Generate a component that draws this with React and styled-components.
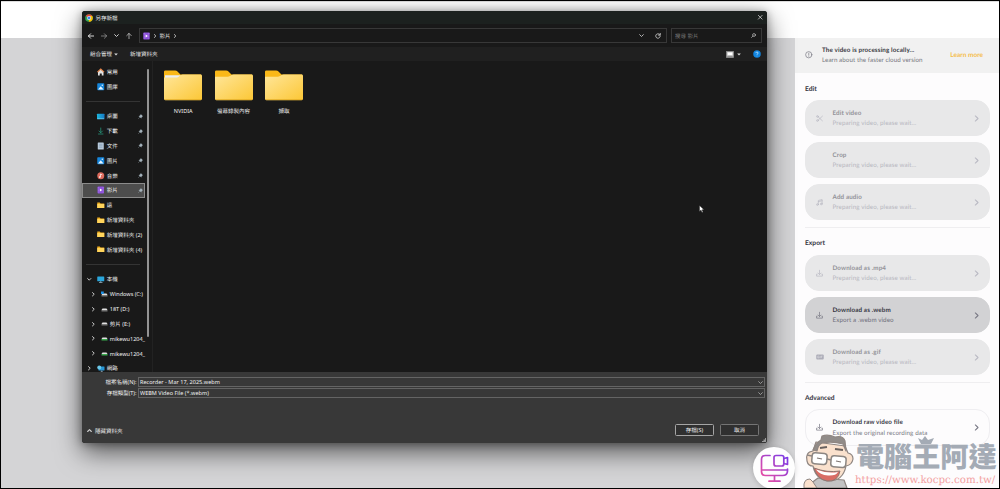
import React from "react";
import styled, { createGlobalStyle } from "styled-components";

const Global = createGlobalStyle`
  * { box-sizing: border-box; }
  body { margin: 0; background: #000; overflow: hidden; text-rendering: geometricPrecision; }
  svg { display: block; flex: none; overflow: visible; }
`;

const Screen = styled.div`
  position: relative;
  width: 1000px;
  height: 489px;
  border: 1px solid #000;
  background: #d4d4d6;
  overflow: hidden;
  display: flex;
  flex-direction: column;
  font-family: Lato, "Noto Sans CJK TC", sans-serif;
`;
const Header = styled.div`
  height: 37px;
  flex: none;
  background: #fff;
  border-top: 1px solid #ddd;
`;
const Main = styled.div`
  flex: 1;
  display: flex;
  justify-content: flex-end;
`;
const Panel = styled.aside`
  width: 204px;
  background: #fdfcfd;
`;
const Notice = styled.div`
  height: 35px;
  margin-bottom: 6.5px;
  padding: 0 16px 1px 9.5px;
  display: flex;
  align-items: center;
  background: #f1f1f1;
`;
const NoticeText = styled.div`
  flex: 1;
  margin-left: 10px;
  padding-top: 2.6px;
`;
const LearnMore = styled.div`
  padding-top: 2.4px;
`;
const Line = styled.div`
  font-size: ${(p) => p.$size || 6.25}px;
  letter-spacing: ${(p) => p.$track || 0}px;
  font-weight: ${(p) => (p.$bold ? 700 : 400)};
  line-height: 10.4px;
  color: ${(p) => p.$color};
  white-space: nowrap;
`;
const Group = styled.section`
  margin: 0 9px 0 10px;
  padding-bottom: 6.5px;
  border-bottom: ${(p) => (p.$last ? "none" : "1px solid #efeef0")};
`;
const GroupTitle = styled.h2`
  margin: 0;
  height: ${(p) => p.$h || 20}px;
  padding-top: ${(p) => p.$top || 3}px;
  font-size: 6.7px;
  line-height: 12px;
  color: #35353f;
`;
const cardColors = {
  off: { bg: "#e8e8e9", title: "#929298", sub: "#b7b7bf", icon: "#b9b9c3" },
  on: { bg: "#d2d2d4", title: "#34343f", sub: "#6f6f7b", icon: "#777783" },
  plain: { bg: "#fdfcfd", title: "#34343f", sub: "#797984", icon: "#777783" },
};
const Card = styled.div`
  height: 36.4px;
  margin-bottom: 5.6px;
  padding: 0 9px 0 10px;
  border-radius: 14px;
  display: flex;
  align-items: center;
  background: ${(p) => cardColors[p.$kind].bg};
  border: 1px solid ${(p) => (p.$kind === "plain" ? "#efeef1" : cardColors[p.$kind].bg)};
  color: ${(p) => cardColors[p.$kind].icon};
  &:last-child { margin-bottom: 0; }
`;
const CardIcon = styled.div`
  width: 16.5px;
  flex: none;
`;
const CardText = styled.div`
  flex: 1;
  padding-top: 2.2px;
`;

const Fab = styled.div`
  position: absolute;
  left: 752px;
  top: 446px;
  width: 42px;
  height: 42px;
  border-radius: 50%;
  background: #fefefe;
  box-shadow: 0 1px 5px rgba(0, 0, 0, 0.18);
  display: flex;
  align-items: center;
  justify-content: center;
`;

const Dialog = styled.div`
  position: absolute;
  left: 81px;
  top: 10px;
  width: 685px;
  height: 432px;
  border-radius: 3px;
  overflow: hidden;
  box-shadow: 0 9px 26px rgba(0, 0, 0, 0.6), 0 1px 9px rgba(0, 0, 0, 0.35);
  background: #191919;
  color: #f2f2f2;
  font-family: "Noto Sans", "Noto Sans CJK TC", sans-serif;
  font-size: 5.5px;
  display: flex;
  flex-direction: column;
  white-space: nowrap;
`;
const TitleBar = styled.div`
  height: 13px;
  padding: 0 5px 0 3px;
  display: flex;
  align-items: center;
  gap: 2.5px;
  background: #1c211f;
`;
const Spacer = styled.div`
  flex: 1;
`;
const NavBar = styled.div`
  height: 23px;
  padding: 0 0 0 6px;
  display: flex;
  align-items: center;
`;
const NavButtons = styled.div`
  width: 51px;
  flex: none;
  display: flex;
  align-items: center;
  gap: 7px;
`;
const Field = styled.div`
  width: ${(p) => p.$w}px;
  flex: none;
  height: 15.5px;
  margin-right: 4px;
  padding: 0 5px 0 3px;
  border: 1px solid #383838;
  display: flex;
  align-items: center;
  gap: 2.8px;
  color: ${(p) => p.$color || "#e6e6e6"};
`;
const FieldGap = styled.div`
  width: 5px;
`;
const ToolBar = styled.div`
  height: 14px;
  padding: 0 6.5px 0 8px;
  display: flex;
  align-items: center;
  background: #202020;
`;
const ToolItem = styled.div`
  display: flex;
  align-items: center;
  gap: ${(p) => p.$gap || 1.5}px;
  margin-right: ${(p) => p.$mr || 0}px;
`;
const Body = styled.div`
  height: 311px;
  display: flex;
  overflow: hidden;
`;
const Sidebar = styled.div`
  width: 63px;
  flex: none;
  padding-top: 3.4px;
`;
const SideRow = styled.div`
  height: 14.83px;
  padding-right: ${(p) => (p.$active ? 1 : 2)}px;
  display: flex;
  align-items: center;
  border: 1px solid ${(p) => (p.$active ? "#8b8b8b" : "transparent")};
  border-left-width: ${(p) => (p.$active ? 1 : 0)}px;
  border-right-width: ${(p) => (p.$active ? 1 : 0)}px;
  padding-left: ${(p) => (p.$active ? 14 : p.$depth ? 9 : p.$tree ? 5 : 15)}px;
  background: ${(p) => (p.$active ? "#4d4d4d" : "transparent")};
`;
const Caret = styled.div`
  width: ${(p) => (p.$depth ? 9.5 : 10)}px;
  flex: none;
`;
const SideLabel = styled.div`
  flex: 1;
  margin-left: 2.3px;
  line-height: 12px;
`;
const SideRule = styled.div`
  height: 14.83px;
  padding: 7px 5px 0 4px;
  &::before {
    content: "";
    display: block;
    height: 1px;
    background: #343434;
  }
`;
const ScrollTrack = styled.div`
  width: 8px;
  flex: none;
  padding: 8px 0 0 2px;
  border-right: 1px solid #222;
  &::before {
    content: "";
    display: block;
    width: 2px;
    height: 268px;
    border-radius: 1px;
    background: #939393;
  }
`;
const Files = styled.div`
  flex: 1;
  padding: 9px 0 0 5px;
  display: flex;
`;
const FileItem = styled.div`
  width: 50.4px;
  display: flex;
  flex-direction: column;
  align-items: center;
`;
const FileName = styled.div`
  margin-top: 4.8px;
  line-height: 10px;
`;
const Footer = styled.div`
  position: relative;
  flex: 1;
  padding: 4.6px 2px 0 0;
  background: #383838;
`;
const FormRow = styled.div`
  height: 11px;
  display: flex;
  align-items: center;
`;
const FormLabel = styled.div`
  width: 56px;
  padding-right: 1.5px;
  text-align: right;
`;
const FormInput = styled.div`
  flex: 1;
  height: 10.5px;
  padding: 0 1px;
  border: 1px solid #646464;
  display: flex;
  align-items: center;
  justify-content: space-between;
  line-height: 8px;
  letter-spacing: 0.03px;
`;
const Actions = styled.div`
  height: 12px;
  margin-top: 25.4px;
  padding: 0 6px 0 5px;
  display: flex;
  align-items: center;
  gap: 6px;
`;
const HideFolders = styled.div`
  flex: 1;
  display: flex;
  align-items: center;
  gap: 3px;
  padding-top: 2px;
`;
const Button = styled.div`
  width: 39px;
  height: 12px;
  border: 1px solid ${(p) => (p.$primary ? "#a5a5a5" : "#747474")};
  border-radius: 1.5px;
  background: #303030;
  line-height: 10px;
  text-align: center;
`;
const Grip = styled.div`
  position: absolute;
  right: 1px;
  bottom: 1px;
`;

const Pointer = styled.div`
  position: absolute;
  left: 698px;
  top: 204px;
`;
const Watermark = styled.div`
  position: absolute;
  left: 802px;
  top: 433px;
  width: 196px;
  height: 54px;
  display: flex;
`;
const BrandText = styled.div`
  margin-left: 2px;
  padding-top: 8px;
  position: relative;
`;
const BrandName = styled.div`
  height: 29px;
  font: 900 28.1px/27px "Noto Sans CJK TC", sans-serif;
  color: #a4abb5;
  white-space: nowrap;
`;
const BrandUrl = styled.div`
  font: 10.25px/14px "DejaVu Serif", serif;
  margin: 2px 0 0 -1px;
  color: #f3a1a2;
  white-space: nowrap;
`;
const Crown = styled.div`
  position: absolute;
  left: 62px;
  top: 2px;
`;

const Stroke = ({ w = 8, h = w, box = "0 0 24 24", sw = 2, c = "currentColor", children }) => (
  <svg width={w} height={h} viewBox={box} fill="none" stroke={c} strokeWidth={sw} strokeLinecap="round" strokeLinejoin="round">
    {children}
  </svg>
);
const Chevron = ({ dir = "right", size = 4, c = "#cfcfcf", sw = 1 }) => {
  const d = { right: "M2 .8 4.3 3 2 5.2", down: "M.8 2 3 4.2 5.2 2", up: "M.8 4.2 3 2 5.2 4.2" }[dir];
  return <Stroke w={size} box="0 0 6 6" sw={sw} c={c}><path d={d} /></Stroke>;
};
const Triangle = () => <svg width="4" height="3" viewBox="0 0 4 3"><path d="M.2.5h3.6L2 2.5z" fill="#ddd" /></svg>;
const InfoIcon = () => (
  <Stroke w={7.5} c="#777782" sw={2.2}><circle cx="12" cy="12" r="10" /><path d="M12 7v6M12 16.5v.4" /></Stroke>
);
const ScissorsIcon = () => (
  <Stroke w={7} sw={2.4}><circle cx="5" cy="5" r="3" /><circle cx="5" cy="19" r="3" /><path d="M22 4 8 17M22 20 8 7" /></Stroke>
);
const MusicIcon = () => (
  <Stroke w={7} sw={2.4}><path d="M8 19V5l13-3v14M8 9l13-3" /><circle cx="5" cy="19" r="3" /><circle cx="18" cy="17" r="3" /></Stroke>
);
const DownloadIcon = () => (
  <Stroke w={7} sw={2.4}><path d="M12 1v14M7 10.5l5 5 5-5M4 14H2v7h20v-7h-2" /></Stroke>
);
const GifIcon = () => (
  <svg width="8" height="6" viewBox="0 0 16 12">
    <rect x=".5" y="1" width="15" height="10" rx="2" fill="#adadb8" />
    <path d="M6 4.2H3.5v3.6H6V6.2M8 4v4M10.2 8V4.2h2.7M10.2 6h2" fill="none" stroke="#e3e3e7" />
  </svg>
);
const cardIcons = { scissors: ScissorsIcon, music: MusicIcon, download: DownloadIcon, gif: GifIcon };

const ChromeIcon = () => (
  <svg width="8" height="8" viewBox="0 0 24 24">
    <circle cx="12" cy="12" r="11.5" fill="#34a853" />
    <path d="M2 6.3A11.5 11.5 0 0 1 22 6.3L12 12z" fill="#ea4335" />
    <path d="M22 6.3A11.5 11.5 0 0 1 11.5 23.5L12 12 12 6.3z" fill="#fbbc04" />
    <circle cx="12" cy="12" r="5.7" fill="#fff" />
    <circle cx="12" cy="12" r="4.4" fill="#4285f4" />
  </svg>
);
const VideoIcon = ({ w = 7 }) => (
  <svg width={w} height="8" viewBox="0 0 14 16">
    <rect x=".5" y="1" width="13" height="14" rx="1.5" fill="#8d52db" />
    <path d="M2 3h1M2 6h1M2 9h1M2 12h1M11 3h1M11 6h1M11 9h1M11 12h1" stroke="#c6a5f3" strokeWidth="1.3" />
    <path d="M5.3 5v6l4.6-3z" fill="#fff" />
  </svg>
);
const SmallFolder = () => (
  <svg width="7.5" height="7" viewBox="0 0 15 14">
    <path d="M.5 1.2h5l1.6 1.6h7.4V12H.5z" fill="#f0ae20" />
    <path d="M.5 4.2h14v8H.5z" fill="#ffd45c" />
  </svg>
);
const BigFolder = ({ doc }) => (
  <svg width="38" height="31" viewBox="0 0 38 31">
    <defs>
      <linearGradient id="folderFill" x1="0" y1="0" x2="1" y2="1">
        <stop offset="0" stopColor="#ffe69a" /><stop offset="1" stopColor="#fcc736" />
      </linearGradient>
    </defs>
    <path d="M0 1.8Q0 .4 1.4.4H11q1.6 0 2.5 1l3 3.1H37v7H0z" fill="#fab818" />
    {doc && <path d="M1 5.3h16l-3 2.6H1z" fill="#eceef1" />}
    <path d={doc ? "M0 7.6h12.5q1.4 0 2.5-1l1.6-1.4q1-.8 2-.8h18q1.4 0 1.4 1.4v23q0 1.4-1.4 1.4H1.4Q0 30.2 0 28.8z" : "M0 6.7h12.5q1.4 0 2.5-.8l1.6-.8q1-.7 2-.7h18q1.4 0 1.4 1.4v23q0 1.4-1.4 1.4H1.4Q0 30.2 0 28.8z"} fill="url(#folderFill)" />
    <path d="M.6 29.6h36.8" stroke="#dfa721" strokeWidth=".7" />
  </svg>
);
const HomeIcon = () => (
  <svg width="7.5" height="8" viewBox="0 0 15 16">
    <path d="M2 7.5 7.5 3 13 7.5V15H9.5v-4h-4v4H2z" fill="#e2e2e2" />
    <path d="M.8 8.3 7.5 2l6.7 6.3" fill="none" stroke="#e8884e" strokeWidth="2.2" />
  </svg>
);
const PictureIcon = () => (
  <svg width="7.5" height="7.5" viewBox="0 0 15 15">
    <rect x=".5" y=".5" width="14" height="14" rx="1.5" fill="#1686dc" />
    <path d="M2 13 7.5 6.5 13 13z" fill="#e8f6ff" /><circle cx="10.5" cy="4.5" r="1.3" fill="#fff" />
  </svg>
);
const DesktopIcon = () => (
  <svg width="7.5" height="7" viewBox="0 0 15 14">
    <defs><linearGradient id="deskFill" x1="0" x2="1"><stop stopColor="#1cb6dd" /><stop offset="1" stopColor="#1579c6" /></linearGradient></defs>
    <rect y="1.5" width="15" height="11" rx="1" fill="url(#deskFill)" /><path d="M1 11.3h13" stroke="#8ce0f4" />
  </svg>
);
const DownIcon = () => (
  <Stroke w={7.5} h={8} box="0 0 15 16" c="#25997d" sw={1.5}><path d="M7.5 2v9M4 8l3.5 3.5L11 8M3 14h9" /></Stroke>
);
const DocIcon = () => (
  <svg width="7.5" height="8" viewBox="0 0 15 16">
    <rect x="1.5" y="1" width="12" height="14" rx="1" fill="#b9cbdc" />
    <path d="M4 4.5h7M4 7.5h7M4 10.5h7" stroke="#6d89a5" strokeWidth="1" />
  </svg>
);
const AudioIcon = () => (
  <svg width="7.5" height="7.5" viewBox="0 0 15 15">
    <circle cx="7.5" cy="7.5" r="7" fill="#dc6a5c" />
    <path d="M7 10V4l3.5 1.8" fill="none" stroke="#fff" strokeWidth="1.4" /><circle cx="5.5" cy="10" r="1.7" fill="#fff" />
  </svg>
);
const PcIcon = () => (
  <svg width="7.5" height="7" viewBox="0 0 15 14">
    <rect x=".5" y="1" width="14" height="9.5" rx="1" fill="#2aa6dc" /><path d="M4 13h7M7.5 10v3" stroke="#a9c8d8" strokeWidth="1.3" />
  </svg>
);
const NetworkIcon = () => (
  <svg width="7.5" height="7.5" viewBox="0 0 15 15">
    <rect x="3" y="3" width="12" height="8" rx="1" fill="#2796d6" /><circle cx="4.5" cy="5" r="4" fill="#6cc8e8" />
    <path d="M7 14h5M9.5 11v3" stroke="#a9c8d8" strokeWidth="1.3" />
  </svg>
);
const Drive = ({ led = "#777", win }) => (
  <svg width="7" height="7" viewBox="0 0 14 14">
    <path d="M3 5h8l2 3H1z" fill="#e2e2e2" /><rect x="1" y="8" width="12" height="3" fill={led} />
    {win && <rect x="0" y="1" width="5.5" height="5" fill="#1e92e6" />}
  </svg>
);
const PinIcon = () => (
  <svg width="5" height="5" viewBox="0 0 10 10">
    <path d="m5.5 0 4.500 4.500-1.200.7-1.700 1.600-.5 2.400L1 4l2.300-.5L5.200 1.500z" fill="#a3b1ba" /><path d="M3.500 6.500.8 9.200" stroke="#a3b1ba" />
  </svg>
);

const DesktopCam = () => (
  <svg width="28" height="28" viewBox="0 0 28 28" fill="none" stroke="url(#camStroke)" strokeWidth="1.7" strokeLinejoin="round" strokeLinecap="round">
    <defs>
      <linearGradient id="camStroke" gradientUnits="userSpaceOnUse" x1="2" y1="26" x2="26" y2="2">
        <stop stopColor="#ee4e9e" /><stop offset="1" stopColor="#7d3be6" />
      </linearGradient>
    </defs>
    <path d="M10 1.5H5.5Q1.5 1.5 1.5 5.5v12q0 4 4 4h17q5 0 5-4.5v-2M1.5 16h25.5M14.5 21.5V27M9 27.200h11" />
    <rect x="14" y="1.5" width="9.8" height="10.5" rx="2" />
    <path d="m24 4.500 3.500-1v7l-3.500-1" />
  </svg>
);

const Mascot = () => (
  <svg width="51" height="54" viewBox="0 0 51 54">
    <g stroke="#8f8682" strokeWidth="1.2" strokeLinejoin="round">
      <path d="M15 44 7 50v4h37l-3-8z" fill="#c3c3c3" />
      <path d="M10 17Q2 18 4 27q1 5 6 5 3 14 16 15 14 0 17-15 6-1 7-7 0-5-5-6L42 12 13 8z" fill="#fae1cd" />
      <path d="M10 16Q13 9 18 6l1-4Q25 0 32 3q8-2 10 4l1 10-3-7q-11-3-21-1-4 2-5 8z" fill="#918c89" />
    </g>
    <path d="M1 54q-1-9 6-9l3 3 4 6z" fill="#fae1cd" stroke="#8f8682" />
    <path d="m17 14 7-1M32 15l8 1" stroke="#69615e" strokeWidth="2" />
    <g fill="#fff" stroke="#8c8682" strokeWidth="1.5">
      <rect x="9" y="19" width="15" height="11" rx="3" transform="rotate(5 16 24)" />
      <rect x="28" y="22" width="15" height="11" rx="3" transform="rotate(5 35 27)" />
      <path d="m24 25 4 1M4 21l5 1" />
    </g>
    <path d="m14 24 5 1M33 27l5 1" stroke="#7d7471" strokeWidth="1.2" />
    <path d="M11 34q13 5 26 3-2 11-13 10-10-2-13-13z" fill="#d96d65" stroke="#8f7772" />
    <path d="M13 35.500q12 4.500 22 2.500-2 4-10 3.500-8-.5-12-6z" fill="#fff" />
  </svg>
);

const SideItem = ({ icon, label, pin, caret, depth, active }) => (
  <SideRow $depth={depth} $tree={!!caret} $active={active}>
    {caret && <Caret $depth={depth}><Chevron dir={caret} size={4.5} sw={1.3} /></Caret>}
    {icon}
    <SideLabel>{label}</SideLabel>
    {pin && <PinIcon />}
  </SideRow>
);

const Action = ({ kind = "off", icon, title, sub = "Preparing video, please wait..." }) => {
  const c = cardColors[kind];
  const Icon = cardIcons[icon];
  return (
    <Card $kind={kind}>
      <CardIcon>{Icon && <Icon />}</CardIcon>
      <CardText>
        <Line $bold $color={c.title} $track={0.13}>{title}</Line>
        <Line $color={c.sub} $track={0.1}>{sub}</Line>
      </CardText>
      <Chevron size={7} sw={0.9} c={c.icon} />
    </Card>
  );
};

export default function App() {
  return (
    <Screen>
      <Global />
      <Header />
      <Main>
        <Panel>
          <Notice>
            <InfoIcon />
            <NoticeText>
              <Line $bold $color="#383841" $track={0.14}>The video is processing locally...</Line>
              <Line $color="#777780" $track={0.06}>Learn about the faster cloud version</Line>
            </NoticeText>
            <LearnMore><Line $color="#f5bd4c" $bold $size={6.5}>Learn more</Line></LearnMore>
          </Notice>
          <Group>
            <GroupTitle $h={20.5} $top={3.2}>Edit</GroupTitle>
            <Action icon="scissors" title="Edit video" />
            <Action title="Crop" />
            <Action icon="music" title="Add audio" />
          </Group>
          <Group>
            <GroupTitle $h={27} $top={9}>Export</GroupTitle>
            <Action icon="download" title="Download as .mp4" />
            <Action kind="on" icon="download" title="Download as .webm" sub="Export a .webm video" />
            <Action icon="gif" title="Download as .gif" />
          </Group>
          <Group $last>
            <GroupTitle $h={26.5} $top={9}>Advanced</GroupTitle>
            <Action kind="plain" icon="download" title="Download raw video file" sub="Export the original recording data" />
          </Group>
        </Panel>
      </Main>

      <Dialog>
        <TitleBar>
          <ChromeIcon />
          <span>另存新檔</span>
          <Spacer />
          <Stroke w={4.5} box="0 0 6 6" sw={1} c="#ddd"><path d="m.5.5 5 5M5.500.5l-5 5" /></Stroke>
        </TitleBar>
        <NavBar>
          <NavButtons>
            <Stroke w={6} box="0 0 8 8" sw={1.2} c="#eee"><path d="M7.500 4h-7M3.500 1l-3 3 3 3" /></Stroke>
            <Stroke w={6} box="0 0 8 8" sw={1} c="#999"><path d="M.5 4h7M4.500 1l3 3-3 3" /></Stroke>
            <Chevron dir="down" size={5} sw={1.2} />
            <Stroke w={6} box="0 0 8 8" sw={1.1} c="#bbb"><path d="M4 7.500v-7M1 3.500l3-3 3 3" /></Stroke>
          </NavButtons>
          <Field $w={528}>
            <VideoIcon />
            <Chevron sw={1.3} /><span>影片</span><Chevron sw={1.3} />
            <Spacer />
            <Chevron dir="down" size={5} />
            <FieldGap />
            <Stroke w={6} box="0 0 12 12" sw={1.6} c="#d5d5d5"><path d="M10.500 6A4.500 4.500 0 1 1 9 2.600M10.500.8v3.500H7" /></Stroke>
          </Field>
          <Field $w={91} $color="#777">
            <span>搜尋 影片</span>
            <Spacer />
            <Stroke w={5} box="0 0 10 10" sw={1.4} c="#bbb"><circle cx="6" cy="4" r="2.9" /><path d="M4 6 1 9" /></Stroke>
          </Field>
        </NavBar>
        <ToolBar>
          <ToolItem $mr={12.5}>組合管理<Triangle /></ToolItem>
          <ToolItem>新增資料夾</ToolItem>
          <Spacer />
          <ToolItem $mr={12} $gap={3}>
            <svg width="8" height="7" viewBox="0 0 8 7"><rect x=".4" y=".4" width="7.2" height="6.2" fill="#c9c9c9" stroke="#888" strokeWidth=".7" /><rect x="1.8" y="1.5" width="4.5" height="2.7" fill="#fff" /><path d="M1.200 5.300h5.600" stroke="#666" strokeWidth=".7" /></svg>
            <Triangle />
          </ToolItem>
          <svg width="8" height="8" viewBox="0 0 16 16"><circle cx="8" cy="8" r="7.5" fill="#1185e0" /><path d="M5.800 6.200c0-3 4.600-2.700 4.400 0C10 8 8 7.800 8 9.500M8 11.500v1" fill="none" stroke="#d8efff" strokeWidth="1.5" /></svg>
        </ToolBar>
        <Body>
          <Sidebar>
            <SideItem icon={<HomeIcon />} label="常用" />
            <SideItem icon={<PictureIcon />} label="圖庫" />
            <SideRule />
            <SideItem icon={<DesktopIcon />} label="桌面" pin />
            <SideItem icon={<DownIcon />} label="下載" pin />
            <SideItem icon={<DocIcon />} label="文件" pin />
            <SideItem icon={<PictureIcon />} label="圖片" pin />
            <SideItem icon={<AudioIcon />} label="音樂" pin />
            <SideItem icon={<VideoIcon w={7.5} />} label="影片" pin active />
            <SideItem icon={<SmallFolder />} label="遠" />
            <SideItem icon={<SmallFolder />} label="新增資料夾" />
            <SideItem icon={<SmallFolder />} label="新增資料夾 (2)" />
            <SideItem icon={<SmallFolder />} label="新增資料夾 (4)" />
            <SideRule />
            <SideItem caret="down" icon={<PcIcon />} label="本機" />
            <SideItem caret="right" depth={1} icon={<Drive win />} label="Windows (C:)" />
            <SideItem caret="right" depth={1} icon={<Drive />} label="18T (D:)" />
            <SideItem caret="right" depth={1} icon={<Drive />} label="剪片 (E:)" />
            <SideItem caret="right" depth={1} icon={<Drive led="#39a84d" />} label="mikewu1204_" />
            <SideItem caret="right" depth={1} icon={<Drive led="#39a84d" />} label="mikewu1204_" />
            <SideItem caret="right" icon={<NetworkIcon />} label="網路" />
          </Sidebar>
          <ScrollTrack />
          <Files>
            <FileItem><BigFolder doc /><FileName>NVIDIA</FileName></FileItem>
            <FileItem><BigFolder /><FileName>螢幕錄製內容</FileName></FileItem>
            <FileItem><BigFolder /><FileName>擷取</FileName></FileItem>
          </Files>
        </Body>
        <Footer>
          <FormRow>
            <FormLabel>檔案名稱(N):</FormLabel>
            <FormInput>Recorder - Mar 17, 2025.webm<Chevron dir="down" size={5} c="#aaa" /></FormInput>
          </FormRow>
          <FormRow>
            <FormLabel>存檔類型(T):</FormLabel>
            <FormInput>WEBM Video File (*.webm)<Chevron dir="down" size={5} c="#aaa" /></FormInput>
          </FormRow>
          <Actions>
            <HideFolders><Chevron dir="up" size={5} sw={1.3} />隱藏資料夾</HideFolders>
            <Button $primary>存檔(S)</Button>
            <Button>取消</Button>
          </Actions>
          <Grip><svg width="4" height="4" viewBox="0 0 4 4"><path d="M3 0h1v4H0V3h1.500V1.500H3z" fill="#999" /></svg></Grip>
        </Footer>
      </Dialog>
      <Fab><DesktopCam /></Fab>

      <Pointer>
        <svg width="5" height="8" viewBox="0 0 10 16"><path d="M1 1v12l3-3 2 5 2-1-2-4.500h4z" fill="#fff" stroke="#111" strokeWidth=".7" /></svg>
      </Pointer>

      <Watermark>
        <Mascot />
        <BrandText>
          <Crown><svg width="16" height="8" viewBox="0 0 16 8"><path d="m0 2 4 2 3-4 3 4 6-2-3 6H3z" fill="#a4abb5" /></svg></Crown>
          <BrandName>電腦王阿達</BrandName>
          <BrandUrl>https://www.kocpc.com.tw/</BrandUrl>
        </BrandText>
      </Watermark>
    </Screen>
  );
}
